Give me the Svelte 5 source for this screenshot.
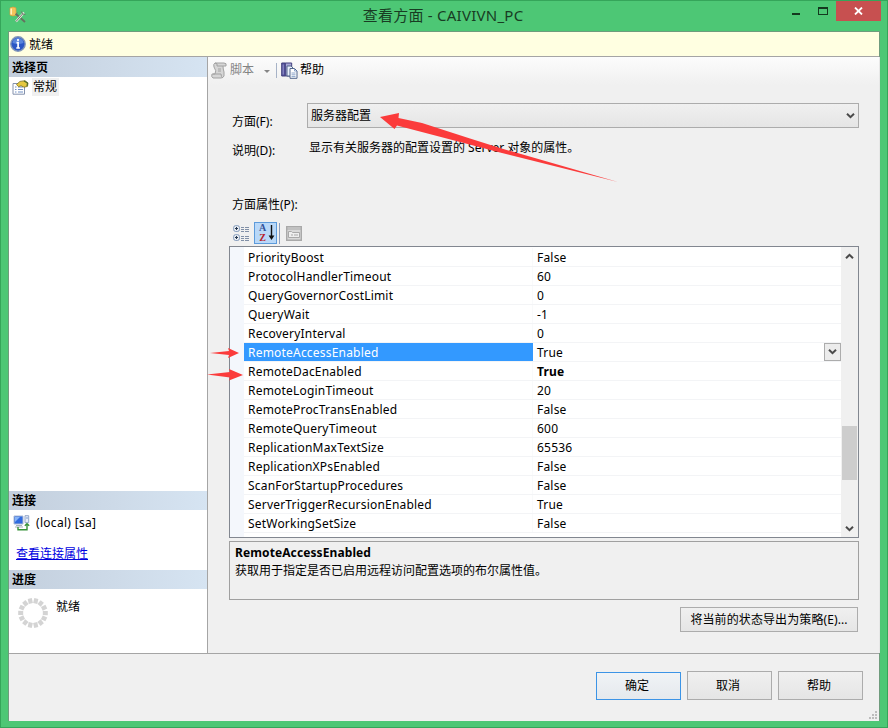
<script>
  const properties = [
    { name: "PriorityBoost", value: "False" },
    { name: "ProtocolHandlerTimeout", value: "60" },
    { name: "QueryGovernorCostLimit", value: "0" },
    { name: "QueryWait", value: "-1" },
    { name: "RecoveryInterval", value: "0" },
    { name: "RemoteAccessEnabled", value: "True" },
    { name: "RemoteDacEnabled", value: "True", changed: true },
    { name: "RemoteLoginTimeout", value: "20" },
    { name: "RemoteProcTransEnabled", value: "False" },
    { name: "RemoteQueryTimeout", value: "600" },
    { name: "ReplicationMaxTextSize", value: "65536" },
    { name: "ReplicationXPsEnabled", value: "False" },
    { name: "ScanForStartupProcedures", value: "False" },
    { name: "ServerTriggerRecursionEnabled", value: "True" },
    { name: "SetWorkingSetSize", value: "False" },
  ];

  const spokes = Array.from({ length: 14 }, (_, i) => (i * 360) / 14);

  let selected = "RemoteAccessEnabled";
</script>

{#snippet chevron(up)}
  <svg class="chevron" class:up width="9" height="8" viewBox="0 0 9 8">
    <path d="M1 1.8 4.5 5.2 8 1.8" fill="none" stroke="#4a4a4a" stroke-width="2" />
  </svg>
{/snippet}

<div class="window">
  <header class="titlebar">
    <svg class="app-icon" width="18" height="18" viewBox="0 0 18 18">
      <path d="M1 2q3-2 6 0v7q-3 2-6 0z" fill="#f3c45c" stroke="#dd9c38" stroke-width=".7" />
      <path d="M2.2 2.5v6" stroke="#fff2bd" stroke-width="1.6" />
      <path d="M7 8l9 8" stroke="#65715f" stroke-width="1.8" />
      <path d="M15 6.5 7 15.5" stroke="#e7eee1" stroke-width="2.2" />
      <path d="M13.5 8 7 15.5M12.5 5.5l1 2.5 3 .3M6 8.7l2.5-2" fill="none" stroke="#6c7469" stroke-width="1" />
    </svg>
    <h1>查看方面 - CAIVIVN_PC</h1>
    <div class="controls">
      <button aria-label="最小化"><span class="min"></span></button>
      <button aria-label="最大化"><span class="max"></span></button>
      <button class="close" aria-label="关闭">
        <svg width="9" height="8" viewBox="0 0 9 8">
          <path d="M1 .5l7 7M8 .5l-7 7" stroke="#fff" stroke-width="1.8" />
        </svg>
      </button>
    </div>
  </header>

  <div class="client">
    <div class="status">
      <svg width="16" height="16" viewBox="0 0 16 16">
        <circle cx="8" cy="8" r="7.2" fill="#2b57c5" stroke="#8296b8" stroke-width="1.4" />
        <path d="M2.5 7a5.5 5 0 0 1 11 0q-5 2-11 0" fill="#6e98e5" opacity=".7" />
        <path d="M8 3v1.9M6.5 6.7h1.6v5M6.3 12h3.6" fill="none" stroke="#fff" stroke-width="1.7" />
      </svg>
      <span>就绪</span>
    </div>

    <div class="content">
      <aside>
        <h2 class="first">选择页</h2>
        <div class="page-item">
          <svg width="17" height="15" viewBox="0 0 17 15">
            <path d="M1 3.5h11.5v10.7H1z" fill="#fff" stroke="#8492ad" />
            <path d="M3 7h1.5M3 9.5h1.5M3 12h1.5M6 7h5M6 9.5h5M6 12h5" stroke="#6f8fc4" />
            <path d="M4.5 4.5 8 1.4 13 .7l3 2.3-.5 3.4-3.5.8-3-1.5-2.5 1z" fill="#e6c840" stroke="#7d7125" stroke-width=".8" />
            <path d="m12 1 3.5 2-.5 3" fill="none" stroke="#4c6b2e" stroke-width="1.2" />
          </svg>
          <span>常规</span>
        </div>

        <h2 class="connection">连接</h2>
        <div class="server">
          <svg width="17" height="16" viewBox="0 0 17 16">
            <path d="M1 1h9v8H1z" fill="#2f6be0" stroke="#aab9d4" />
            <path d="M2 2h5L2 7z" fill="#88b4f7" />
            <path d="M3 10.5h6M2 12h8" stroke="#a5afbd" stroke-width="1.2" />
            <path d="M12 .7h3.7v7H12z" fill="#e7eefa" stroke="#92a5c7" />
            <path d="M13 3h2" stroke="#7f9bcd" />
            <path d="M5 12v2.8h9V9M11.8 10.7 14 8.6l2.2 2.1" fill="none" stroke="#369238" stroke-width="1.4" />
          </svg>
          <span>(local) [sa]</span>
        </div>
        <a href="#connection">查看连接属性</a>

        <h2 class="progress-title">进度</h2>
        <div class="progress">
          <svg width="32" height="32" viewBox="0 0 32 32">
            {#each spokes as angle}
              <rect x="13.9" y="1.2" width="4.2" height="5" fill="#d4d4d4" transform="rotate({angle + 13} 16 16)" />
            {/each}
          </svg>
          <span>就绪</span>
        </div>
      </aside>

      <main>
        <div class="toolbar">
          <svg width="17" height="17" viewBox="0 0 17 17">
            <path d="M4 1h9q3 0 2 3h-3q0 3 1 6v4q-1 2-3 2H2q-2-1-1-4h3q2-3-1-7-1-3 1-4z" fill="#d6d6d6" stroke="#a2a2a2" />
            <path d="M4 1q3 0 2 3h6M2 12h8q0 3 2 4M7 7h3M7 9h3" fill="none" stroke="#a2a2a2" />
          </svg>
          <span class="disabled">脚本</span>
          <span class="drop"></span>
          <span class="divider"></span>
          <svg class="help-icon" width="17" height="17" viewBox="0 0 17 17">
            <path d="M.7 1h3.6v13H.7z" fill="#5754a0" stroke="#403f7c" />
            <path d="M4.3 1h6.4v13H4.3z" fill="#a9a7d6" stroke="#403f7c" />
            <path d="M2.2 2.5v10" stroke="#9997cb" />
            <path d="M6 4h4l2 2v8H6z" fill="#eaf1fc" stroke="#52668c" />
            <path d="M9 6.5h4.5L16 9v7.3H9z" fill="#fff" stroke="#52668c" />
            <path d="M13.5 6.5V9H16M10.5 11h4M10.5 12.8h4M10.5 14.6h4" fill="none" stroke="#6f8ebd" stroke-width=".8" />
          </svg>
          <span>帮助</span>
        </div>

        <div class="form">
          <div class="field">
            <span class="label">方面(F):</span>
            <div class="combo">服务器配置 {@render chevron(false)}</div>
          </div>
          <div class="field description">
            <span class="label">说明(D):</span>
            <p>显示有关服务器的配置设置的 Server 对象的属性。</p>
          </div>
          <div class="section-label">方面属性(P):</div>

          <div class="grid-tools">
            <svg class="categories" width="17" height="17" viewBox="0 0 17 17">
              <rect x=".8" y=".8" width="5.5" height="5.5" rx="1.5" fill="#fff" stroke="#758fb4" />
              <rect x=".8" y="9.8" width="5.5" height="5.5" rx="1.5" fill="#fff" stroke="#758fb4" />
              <path d="M2 3.5h3M3.5 2v3M2 12.5h3M3.5 11v3" stroke="#24364f" stroke-width="1.2" />
              <path d="M8 2.5h3M12 2.5h4M8 4.5h3M12 4.5h4M8 6.5h3M12 6.5h4M8 11.5h3M12 11.5h4M8 13.5h3M12 13.5h4M8 15.5h3M12 15.5h4" stroke="#8190a7" />
            </svg>
            <button class="sort" aria-label="字母顺序">
              <span class="letters"><b>A</b><b class="z">Z</b></span>
              <svg width="7" height="16" viewBox="0 0 7 16">
                <path d="M3.5 0v13" stroke="#111" stroke-width="1.4" />
                <path d="M.6 10.5h5.8L3.5 15z" fill="#111" />
              </svg>
            </button>
            <span class="divider"></span>
            <svg class="pages" width="16" height="15" viewBox="0 0 16 15">
              <path d="M.7.7h14.6v13.6H.7z" fill="#d9d9d9" stroke="#a9a9a9" stroke-width="1.4" />
              <path d="M1 3h14" stroke="#a9a9a9" />
              <path d="M2.5 11.5V5.5h3l1 1h7v5z" fill="#eee" stroke="#a9a9a9" />
              <path d="M5 9h2M8 9h4" stroke="#a9a9a9" />
            </svg>
          </div>

          <div class="property-grid">
            <div class="rows">
              {#each properties as property}
                <div class="row" class:selected={property.name === selected}>
                  <span class="name">{property.name}</span>
                  <span class="value" class:changed={property.changed}>{property.value}</span>
                  {#if property.name === selected}
                    <button class="row-drop" aria-label="选择值">{@render chevron(false)}</button>
                  {/if}
                </div>
              {/each}
            </div>
            <div class="scrollbar">
              {@render chevron(true)}
              <div class="thumb"></div>
              {@render chevron(false)}
            </div>
          </div>

          <div class="help">
            <strong>{selected}</strong>
            <p>获取用于指定是否已启用远程访问配置选项的布尔属性值。</p>
          </div>
          <button class="button export">将当前的状态导出为策略(E)...</button>
        </div>
      </main>
    </div>

    <footer>
      <button class="button default">确定</button>
      <button class="button">取消</button>
      <button class="button">帮助</button>
      <svg class="grip" width="9" height="9" viewBox="0 0 9 9">
        <path d="M6 0h2v2H6zM3 3h2v2H3zM6 3h2v2H6zM0 6h2v2H0zM3 6h2v2H3zM6 6h2v2H6z" fill="#bcbcbc" />
      </svg>
    </footer>
  </div>

  <svg class="annotations" width="888" height="728" viewBox="0 0 888 728">
    <path d="M380 117 399 113 398.5 118 422 123 470 138.500 500 148 618 182 500 152.500 460 142 397 125.500 394.500 129Z" />
    <path d="M210 353 229 351 228 348 239 353 228 358 229 355Z" />
    <path d="M207 374.500 230 372 229 369 243 375 229 380.500 230 377.500Z" />
  </svg>
</div>

<style>
  :global(body) {
    margin: 0;
    overflow: hidden;
  }

  .window {
    position: relative;
    box-sizing: border-box;
    width: 888px;
    height: 728px;
    padding: 0 7px 7px;
    border: 1px solid #35a55a;
    background: #4dc775;
    color: #000;
    font-family: "Noto Sans", "Noto Sans CJK SC", sans-serif;
    font-size: 12px;
    line-height: 18px;
  }

  * {
    box-sizing: border-box;
  }

  svg {
    display: block;
    flex: none;
  }

  h1,
  h2,
  p {
    margin: 0;
  }

  button {
    padding: 0;
    color: inherit;
    font: inherit;
  }

  .titlebar {
    display: flex;
    height: 30px;
    align-items: flex-start;
  }

  .app-icon {
    margin: 5px 0 0 1px;
  }

  h1 {
    flex: 1;
    padding: 4px 0 0 77px;
    color: #183c23;
    font-size: 15px;
    font-weight: 400;
    letter-spacing: 0.25px;
    line-height: 21px;
    text-align: center;
  }

  .controls {
    display: flex;
  }

  .controls button {
    display: flex;
    width: 27px;
    height: 20px;
    align-items: center;
    justify-content: center;
    border: 0;
    background: none;
  }

  .controls .close {
    width: 45px;
    margin-right: -1px;
    background: #c75050;
  }

  .min {
    width: 8px;
    height: 2px;
    margin-top: 6px;
    background: #14391f;
  }

  .max {
    width: 10px;
    height: 8px;
    border: 1px solid #14391f;
    border-top-width: 2px;
  }

  .client {
    display: flex;
    height: 690px;
    flex-direction: column;
    border: 1px solid #6f9c7d;
    border-bottom: 0;
    background: #f0f0f0;
  }

  .status {
    display: flex;
    height: 25px;
    flex: none;
    align-items: center;
    gap: 3px;
    padding-left: 1px;
    border-bottom: 1px solid #a5a5a5;
    background: #ffffe1;
  }

  .status span {
    padding-top: 1px;
  }

  .content {
    display: flex;
    height: 597px;
    flex: none;
    border-bottom: 1px solid #a5a5a5;
  }

  aside {
    width: 199px;
    flex: none;
    border-right: 1px solid #a5a5a5;
    background: #fff;
  }

  h2 {
    height: 19px;
    padding-left: 3px;
    background: linear-gradient(90deg, #c3cfdd, #d6e4f2);
    font-size: 12px;
    font-weight: 700;
    line-height: 19px;
  }

  .first {
    height: 20px;
    line-height: 22px;
  }

  .page-item {
    display: flex;
    height: 20px;
    align-items: center;
    gap: 3px;
    padding-left: 3px;
  }

  .page-item span {
    padding: 0 2px 0 1px;
    background: #f0f0f0;
  }

  .connection {
    margin-top: 394px;
  }

  .server {
    display: flex;
    height: 26px;
    align-items: center;
    gap: 6px;
    padding-left: 4px;
    letter-spacing: 0.3px;
  }

  a {
    display: block;
    height: 34px;
    padding: 9px 0 0 7px;
    color: #0000e0;
  }

  .progress {
    display: flex;
    gap: 7px;
    padding: 8px;
  }

  .progress span {
    padding-top: 1px;
  }

  main {
    flex: 1;
    border-right: 1px solid #e7e7e7;
    background: #f0f0f0;
  }

  .toolbar {
    display: flex;
    height: 28px;
    align-items: center;
    padding: 0 0 2px 3px;
    background: linear-gradient(#fcfcfc, #f0f0f0);
  }

  .disabled {
    margin-left: 2px;
    color: #838383;
  }

  .drop {
    margin: 3px 6px 0 10px;
    border: 3px solid transparent;
    border-top-color: #858585;
    border-bottom: 0;
  }

  .divider {
    width: 1px;
    height: 15px;
    background: #a7b3c7;
  }

  .help-icon {
    margin: 0 2px 0 4px;
  }

  .form {
    padding: 18px 20px 0 21px;
  }

  .field {
    display: flex;
    height: 36px;
  }

  .label {
    width: 78px;
    padding: 10px 0 0 3px;
  }

  .combo {
    display: flex;
    width: 552px;
    height: 25px;
    align-items: center;
    justify-content: space-between;
    padding: 0 3px;
    border: 1px solid #acacac;
    background: linear-gradient(#f0f0f0, #e5e5e5);
  }

  .description .label {
    padding-top: 3px;
  }

  .description p {
    padding-left: 2px;
  }

  .section-label {
    height: 46px;
    padding: 21px 0 0 3px;
  }

  .grid-tools {
    display: flex;
    height: 25px;
    align-items: center;
    padding: 0 0 1px 4px;
  }

  .sort {
    display: flex;
    width: 23px;
    height: 22px;
    align-items: center;
    gap: 1px;
    margin: 0 2px 0 4px;
    padding-left: 3px;
    border: 1px solid #5d9bdb;
    background: #b9d8f8;
  }

  .letters {
    display: flex;
    width: 9px;
    flex-direction: column;
    color: #355398;
    font-family: "Liberation Serif", serif;
    font-size: 10px;
    line-height: 10px;
  }

  .z {
    color: #b8202a;
  }

  .grid-tools .divider {
    height: 21px;
    background: #8d9fbe;
  }

  .pages {
    margin-left: 6px;
  }

  .property-grid {
    display: flex;
    width: 630px;
    height: 292px;
    border: 1px solid #828790;
    background: #fff;
  }

  .rows {
    flex: 1;
    padding: 1px 0 0 14px;
    background: linear-gradient(90deg, #f4f7fc 14px, #fff 14px);
  }

  .row {
    display: flex;
    height: 19px;
    border-bottom: 1px solid #f3f4f6;
    letter-spacing: 0.2px;
    line-height: 20px;
  }

  .name {
    width: 289px;
    padding-left: 4px;
    border-right: 1px solid #f9fafb;
  }

  .value {
    flex: 1;
    padding-left: 4px;
  }

  .changed {
    font-weight: 700;
  }

  .selected .name {
    border-right-color: #3399ff;
    background: #3399ff;
    color: #fff;
  }

  .row-drop {
    display: flex;
    width: 17px;
    height: 18px;
    align-items: center;
    justify-content: center;
    border: 1px solid #acacac;
    background: #ececec;
  }

  .scrollbar {
    display: flex;
    width: 17px;
    flex-direction: column;
    align-items: center;
    padding: 5px 0 4px;
    background: #f0f0f0;
  }

  .up {
    transform: rotate(180deg);
  }

  .thumb {
    width: 15px;
    height: 54px;
    flex: none;
    margin: 166px 0 45px;
    background: #cdcdcd;
  }

  .help {
    width: 630px;
    height: 59px;
    margin-top: 3px;
    padding: 2px 5px;
    border: 1px solid #a0a0a0;
  }

  .help strong {
    display: block;
    letter-spacing: 0.1px;
  }

  .button {
    width: 85px;
    height: 29px;
    padding-right: 3px;
    border: 1px solid #acacac;
    background: linear-gradient(#f0f0f0, #e5e5e5);
  }

  .export {
    display: block;
    width: 178px;
    height: 25px;
    margin: 7px 0 0 451px;
    padding: 0;
    letter-spacing: 0.1px;
  }

  footer {
    display: flex;
    flex: 1;
    justify-content: flex-end;
    gap: 6px;
    padding: 17px 0 0;
  }

  .default {
    height: 28px;
    margin-top: 1px;
    border-color: #3c94e6;
    background: linear-gradient(#f0f3f6, #e5e9ed);
  }

  .grip {
    align-self: flex-end;
    margin: 0 1px 1px 0;
  }

  .annotations {
    position: absolute;
    top: -1px;
    left: -1px;
    fill: #fb3b3b;
    pointer-events: none;
  }
</style>
